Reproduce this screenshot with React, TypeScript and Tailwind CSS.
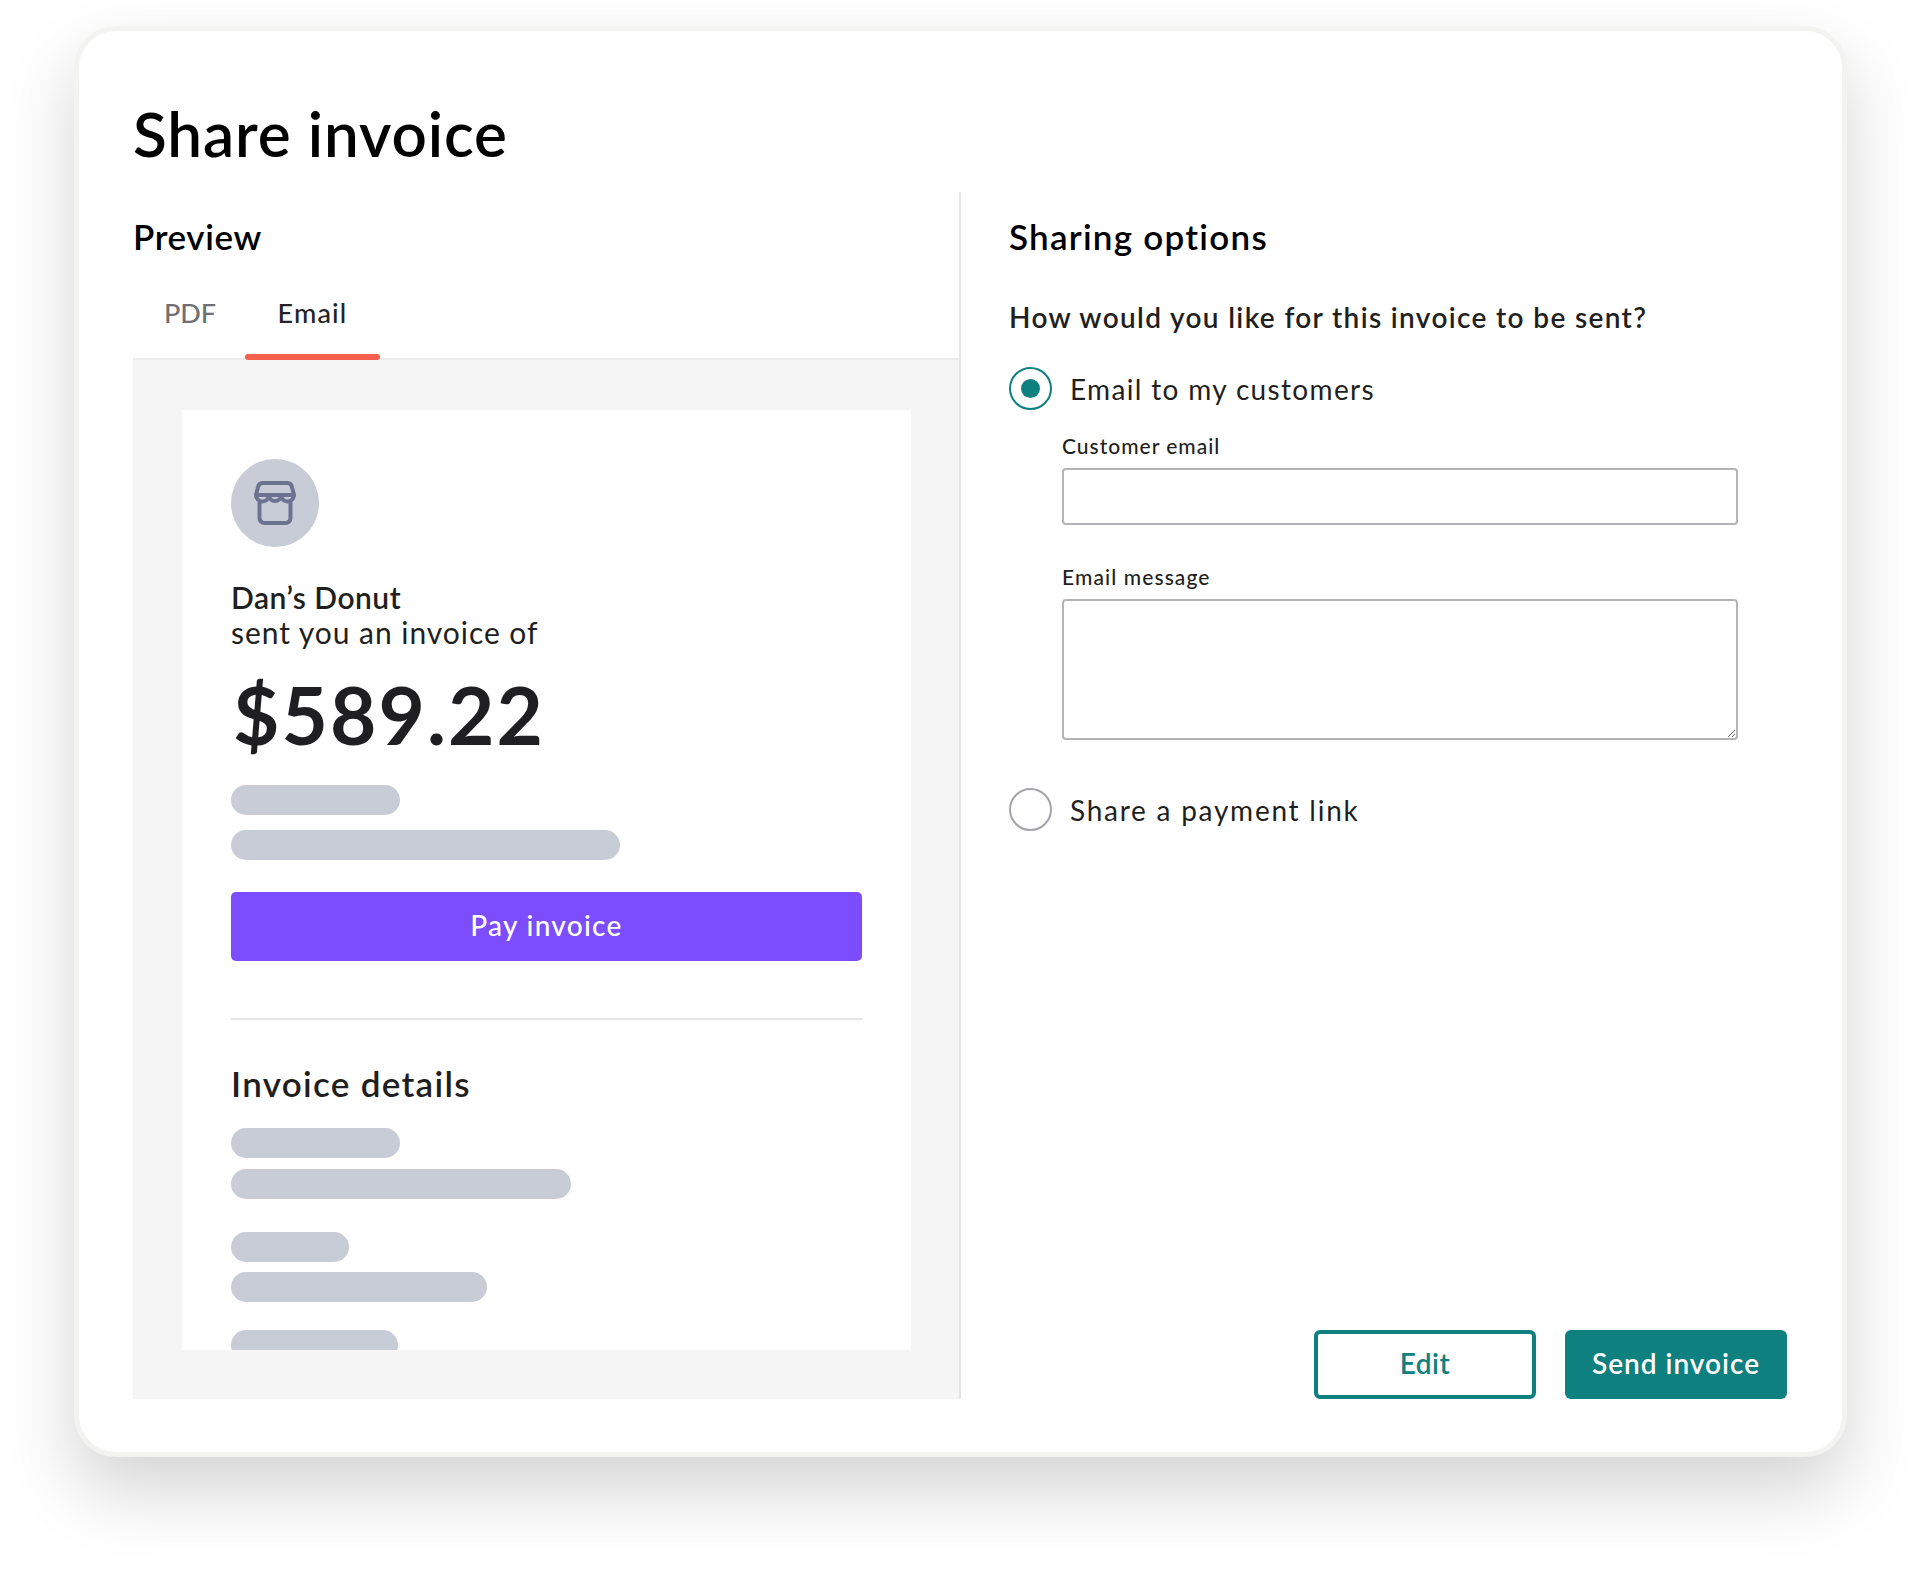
const Bar = ({ className }: { className: string }) => (
  <div className={`h-[30px] shrink-0 rounded-[15px] bg-[#c8ccd6] ${className}`} />
)

const StoreIcon = () => (
  <svg width="42" height="44" viewBox="0 0 42 44" fill="none" stroke="#6b7391" strokeWidth="4" strokeLinejoin="round" strokeLinecap="round">
    <path d="M5.5 22v15a5 5 0 0 0 5 5h21a5 5 0 0 0 5-5V22" />
    <path d="M9 2h24a5 5 0 0 1 5 4l2 8H2l2-8a5 5 0 0 1 5-4z" />
    <path d="M2 14a6.5 6.5 0 0 0 13 0a6 6 0 0 0 12 0a6.5 6.5 0 0 0 13 0" />
  </svg>
)

const Radio = ({ checked }: { checked?: boolean }) => (
  <span
    className={`flex size-[43px] shrink-0 items-center justify-center rounded-full border-2 ${
      checked ? 'border-[#0e8080]' : 'border-[#a3a3aa]'
    }`}
  >
    {checked && <span className="size-[19px] rounded-full bg-[#0e8080]" />}
  </span>
)

export default function App() {
  return (
    <div className="h-[1581px] bg-white pl-[74px] pt-[26px] font-['Lato',sans-serif] text-[#1f1f21]">
      <div className="flex h-[1431px] w-[1773px] flex-col rounded-[42px] border-[5px] border-[#f3f3f1] bg-white pb-[53px] pl-[54px] pr-[55px] pt-[66px] shadow-[0_34px_70px_rgba(0,0,0,0.17)]">
        <h1 className="h-[72px] text-[62px] font-semibold leading-[72px] tracking-[0.9px] text-black">Share invoice</h1>
        <div className="mt-[23px] flex min-h-0 flex-1">
          {/* Preview */}
          <div className="flex w-[828px] shrink-0 flex-col border-r-2 border-[#e6e6e6] pt-[24px]">
            <h2 className="h-[40px] text-[35px] font-semibold leading-[40px] tracking-[0.6px] text-black">Preview</h2>
            <div className="mt-[32px] flex h-[72px] shrink-0 items-start border-b-2 border-[#ececec] pl-[31px]">
              <span className="w-[81px] pt-[9px] text-[27px] font-medium leading-[32px] text-[#6f6f76]">PDF</span>
              <span className="relative h-full w-[135px] pt-[9px] text-center text-[27px] font-medium leading-[32px] tracking-[1.2px] text-[#242428]">
                Email
                <span className="absolute -bottom-[2px] left-0 h-[6px] w-full rounded-[3px] bg-[#f55f4e]" />
              </span>
            </div>
            <div className="min-h-0 flex-1 bg-[#f5f5f5] pb-[49px] pl-[49px] pr-[48px] pt-[50px]">
              <div className="flex h-full flex-col overflow-hidden bg-white px-[49px] pt-[49px]">
                <div className="flex size-[88px] shrink-0 items-center justify-center rounded-full bg-[#c8ccd6]">
                  <StoreIcon />
                </div>
                <p className="mt-[32px] text-[30px] font-semibold leading-[36px] tracking-[0.5px]">Dan’s Donut</p>
                <p className="text-[30px] leading-[34px] tracking-[0.95px]">sent you an invoice of</p>
                <p className="ml-[2px] mt-[20px] text-[80px] font-bold leading-[90px] tracking-[2.1px]">$589.22</p>
                <Bar className="mt-[26px] w-[169px]" />
                <Bar className="mt-[15px] w-[389px]" />
                <button className="mt-[32px] h-[69px] w-full shrink-0 rounded-[5px] bg-[#7c4dff] pb-[3px] text-[28px] font-medium tracking-[1.3px] text-white">
                  Pay invoice
                </button>
                <hr className="mt-[57px] border-t-2 border-[#e4e4e4]" />
                <h3 className="mt-[43px] h-[40px] shrink-0 text-[35px] font-semibold leading-[40px] tracking-[1.3px]">Invoice details</h3>
                <Bar className="mt-[25px] w-[169px]" />
                <Bar className="mt-[11px] w-[340px]" />
                <Bar className="mt-[33px] w-[118px]" />
                <Bar className="mt-[10px] w-[256px]" />
                <Bar className="mt-[28px] w-[167px]" />
              </div>
            </div>
          </div>

          {/* Sharing options */}
          <div className="flex flex-1 flex-col pl-[48px] pt-[24px]">
            <h2 className="h-[40px] text-[35px] font-semibold leading-[40px] tracking-[1.25px] text-black">Sharing options</h2>
            <p className="mt-[43px] text-[28px] font-semibold leading-[36px] tracking-[1.35px]">How would you like for this invoice to be sent?</p>
            <label className="mt-[32px] flex items-center gap-[18px] text-[28px] leading-[36px] tracking-[1.34px]">
              <Radio checked />
              Email to my customers
            </label>
            <div className="w-[729px] pl-[53px]">
              <label className="mt-[24px] block text-[21px] font-medium leading-[24px] tracking-[1px]">Customer email</label>
              <div className="mt-[10px] h-[57px] rounded-[4px] border-2 border-[#b4b4b8] bg-white" />
              <label className="mt-[40px] block text-[21px] font-medium leading-[24px] tracking-[1.1px]">Email message</label>
              <textarea className="mt-[10px] block h-[141px] w-full rounded-[4px] border-2 border-[#b4b4b8] bg-white" />
            </div>
            <label className="mt-[48px] flex items-center gap-[18px] text-[28px] leading-[36px] tracking-[1.75px]">
              <Radio />
              Share a payment link
            </label>
            <div className="mt-auto flex justify-end gap-[29px]">
              <button className="h-[69px] w-[222px] rounded-[6px] border-[4px] border-[#0e8080] bg-white pb-[3px] text-[28px] font-semibold tracking-[0.5px] text-[#0e8080]">
                Edit
              </button>
              <button className="h-[69px] w-[222px] rounded-[6px] bg-[#0e8080] pb-[3px] text-[28px] font-semibold tracking-[1px] text-white">
                Send invoice
              </button>
            </div>
          </div>
        </div>
      </div>
    </div>
  )
}
